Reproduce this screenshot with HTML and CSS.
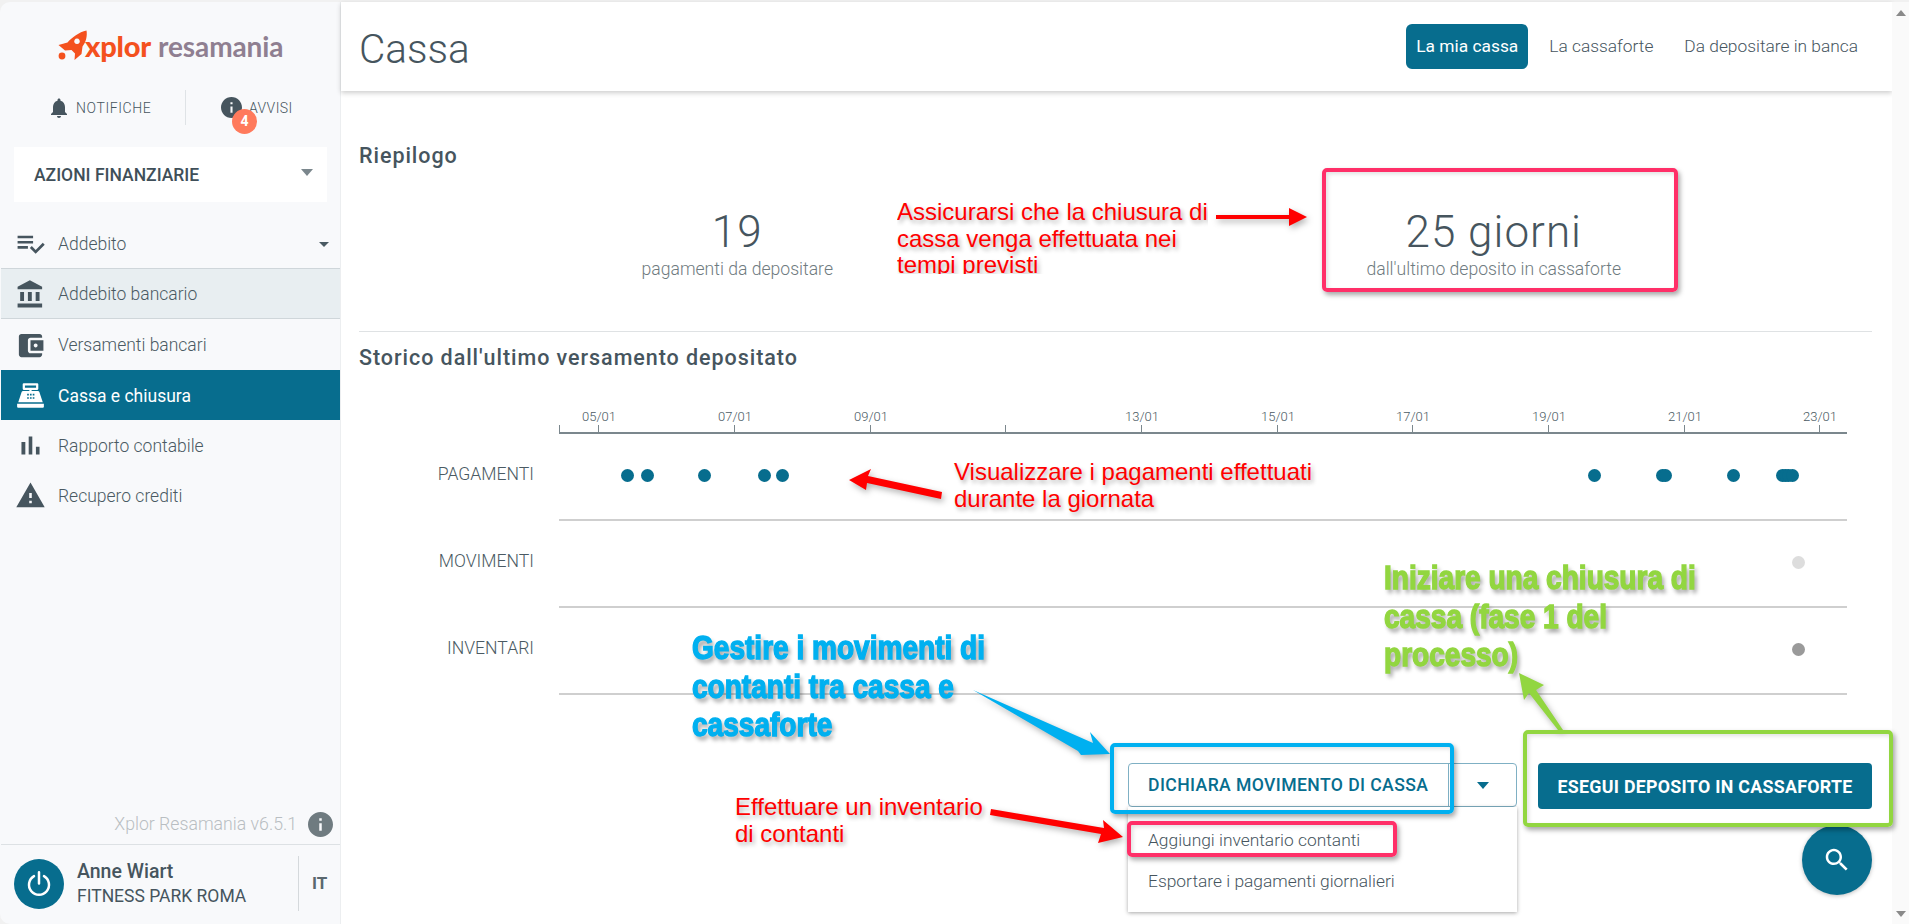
FILE: index.html
```html
<!DOCTYPE html>
<html lang="it">
<head>
<meta charset="utf-8">
<title>Cassa</title>
<link rel="stylesheet" href="styles.css">
</head>
<body>
<div class="app">
  <aside class="sidebar">
    <div class="logo">
      <svg class="rocket" viewBox="0 0 30 32"><path d="M28.5 0.5C29.5 6 28 12 24.5 16.5L23.5 24L16.5 30L17 23.5L13.5 20L7 20.5L0.5 15L9.5 12.5C14 7.5 21 2 28.5 0.5ZM19 8.5a2.8 2.8 0 1 0 0.01 0Z" fill-rule="evenodd"/><circle cx="4" cy="26" r="3.4"/></svg>
      <span class="logo-x">xplor</span><span class="logo-r">resamania</span>
    </div>
    <div class="alerts">
      <div class="alert">
        <svg class="ic-bell" viewBox="0 0 24 24"><path d="M12 22c1.1 0 2-.9 2-2h-4c0 1.1.89 2 2 2zm6-6v-5c0-3.07-1.64-5.64-4.5-6.32V4c0-.83-.67-1.5-1.5-1.5s-1.5.67-1.5 1.5v.68C7.63 5.36 6 7.92 6 11v5l-2 2v1h16v-1l-2-2z"/></svg>
        <span>NOTIFICHE</span>
      </div>
      <div class="alert alert-right">
        <svg class="ic-info" viewBox="2 2 20 20"><path d="M12 2C6.48 2 2 6.48 2 12s4.48 10 10 10 10-4.48 10-10S17.52 2 12 2zm1 15h-2v-6h2v6zm0-8h-2V7h2v2z"/></svg>
        <span>AVVISI</span>
        <b class="badge">4</b>
      </div>
    </div>
    <div class="select"><span>AZIONI FINANZIARIE</span><i class="caret caret-gray"></i></div>
    <nav class="menu">
      <a class="item item-first"><svg viewBox="0 0 24 24"><path d="M14 10H2v2h12v-2zm0-4H2v2h12V6zM2 16h8v-2H2v2zm19.5-4.5L23 13l-6.99 7-4.51-4.5L13 14l3.01 3 5.49-5.5z"/></svg><span>Addebito</span><i class="caret caret-small"></i></a>
      <a class="item item-sel"><svg viewBox="0 0 24 24"><path d="M4 10v7h3v-7H4zm6 0v7h3v-7h-3zM2 22h19v-3H2v3zm14-12v7h3v-7h-3zm-4.5-9L2 6v2h19V6l-9.5-5z"/></svg><span>Addebito bancario</span></a>
      <a class="item item-tall"><svg viewBox="0 0 24 24"><path d="M21 18v1c0 1.1-.9 2-2 2H5c-1.11 0-2-.9-2-2V5c0-1.1.89-2 2-2h14c1.1 0 2 .9 2 2v1h-9c-1.11 0-2 .9-2 2v8c0 1.1.89 2 2 2h9zm-9-2h10V8H12v8zm4-2.5c-.83 0-1.5-.67-1.5-1.5s.67-1.5 1.5-1.5 1.5.67 1.5 1.5-.67 1.5-1.5 1.5z"/></svg><span>Versamenti bancari</span></a>
      <a class="item item-active"><svg viewBox="0 0 26 24"><path fill-rule="evenodd" d="M7 1h12a1 1 0 0 1 1 1v4a1 1 0 0 1-1 1h-5v1h5.5c.8 0 1.4.5 1.6 1.2L24 18H2L4.900 9.200C5.100 8.500 5.700 8 6.500 8H12V7H7a1 1 0 0 1-1-1V2a1 1 0 0 1 1-1ZM8 3v2h10V3ZM10 10.500v1.500h1.500v-1.500ZM12.500 10.500v1.500h1.500v-1.500ZM15 10.500v1.500h1.500v-1.500ZM10 13.500v1.500h1.500v-1.500ZM12.500 13.500v1.500h1.500v-1.500ZM15 13.500v1.500h1.500v-1.500ZM1 19.500h24V22a1 1 0 0 1-1 1H2a1 1 0 0 1-1-1Z"/></svg><span>Cassa e chiusura</span></a>
      <a class="item"><svg viewBox="0 0 24 24"><path d="M5 9.200h3V19H5zM10.600 5h2.800v14h-2.800zm5.600 8H19v6h-2.800z"/></svg><span>Rapporto contabile</span></a>
      <a class="item"><svg viewBox="0 0 24 24"><path d="M1 21h22L12 2 1 21zm12-3h-2v-2h2v2zm0-4h-2v-4h2v4z"/></svg><span>Recupero crediti</span></a>
    </nav>
    <div class="version"><span>Xplor Resamania v6.5.1</span><svg viewBox="2 2 20 20"><path d="M12 2C6.48 2 2 6.48 2 12s4.48 10 10 10 10-4.48 10-10S17.52 2 12 2zm1 15h-2v-6h2v6zm0-8h-2V7h2v2z"/></svg></div>
    <div class="user">
      <div class="power"><svg viewBox="0 0 24 24"><path d="M8 5.700a8 8 0 1 0 8 0M12 2.500v9"/></svg></div>
      <div class="who"><strong>Anne Wiart</strong><span>FITNESS PARK ROMA</span></div>
      <div class="lang">IT</div>
    </div>
  </aside>

  <main class="main">
    <header class="top">
      <h1>Cassa</h1>
      <div class="tabs">
        <a class="tab tab-on">La mia cassa</a>
        <a class="tab">La cassaforte</a>
        <a class="tab">Da depositare in banca</a>
      </div>
    </header>
    <section class="content">
      <h2 class="h-first">Riepilogo</h2>
      <div class="stats">
        <div class="stat"><div class="num">19</div><div class="cap">pagamenti da depositare</div></div>
        <div class="stat"><div class="num">25 giorni</div><div class="cap">dall'ultimo deposito in cassaforte</div></div>
      </div>
      <h2 class="h-second">Storico dall'ultimo versamento depositato</h2>
      <div class="chart">
        <div class="axis">
          <i class="tick" style="left:0"></i>
          <i class="tick" style="left:39px"><span>05/01</span></i>
          <i class="tick" style="left:175px"><span>07/01</span></i>
          <i class="tick" style="left:311px"><span>09/01</span></i>
          <i class="tick" style="left:446px"></i>
          <i class="tick" style="left:582px"><span>13/01</span></i>
          <i class="tick" style="left:718px"><span>15/01</span></i>
          <i class="tick" style="left:853px"><span>17/01</span></i>
          <i class="tick" style="left:989px"><span>19/01</span></i>
          <i class="tick" style="left:1125px"><span>21/01</span></i>
          <i class="tick" style="left:1260px"><span>23/01</span></i>
        </div>
        <div class="row">
          <div class="row-label">PAGAMENTI</div>
          <div class="track">
            <i class="dot" style="left:62px"></i><i class="dot" style="left:82px"></i><i class="dot" style="left:139px"></i><i class="dot" style="left:199px"></i><i class="dot" style="left:217px"></i><i class="dot" style="left:1029px"></i><i class="dot" style="left:1097px"></i><i class="dot" style="left:1100px"></i><i class="dot" style="left:1168px"></i><i class="dot" style="left:1217px"></i><i class="dot" style="left:1220px"></i><i class="dot" style="left:1223px"></i><i class="dot" style="left:1227px"></i>
          </div>
        </div>
        <div class="row">
          <div class="row-label">MOVIMENTI</div>
          <div class="track"><i class="dot dot-light" style="left:1233px"></i></div>
        </div>
        <div class="row">
          <div class="row-label">INVENTARI</div>
          <div class="track"><i class="dot dot-gray" style="left:1233px"></i></div>
        </div>
      </div>
      <div class="actions">
        <div class="split">
          <button class="split-main">DICHIARA MOVIMENTO DI CASSA</button>
          <button class="split-caret"><i class="caret caret-teal"></i></button>
          <div class="dropdown">
            <a>Aggiungi inventario contanti</a>
            <a>Esportare i pagamenti giornalieri</a>
          </div>
        </div>
        <button class="primary">ESEGUI DEPOSITO IN CASSAFORTE</button>
      </div>
    </section>
    <button class="fab"><svg viewBox="0 0 24 24"><path d="M15.500 14h-.79l-.28-.27C15.410 12.590 16 11.110 16 9.500 16 5.910 13.090 3 9.500 3S3 5.910 3 9.500 5.910 16 9.500 16c1.610 0 3.090-.59 4.230-1.570l.27.28v.79l5 4.990L20.490 19l-4.990-5zm-6 0C7.010 14 5 11.990 5 9.500S7.010 5 9.500 5 14 7.010 14 9.500 11.990 14 9.500 14z"/></svg></button>
  </main>

  <div class="scrollbar"><i class="sb-up"></i><i class="sb-down"></i></div>

  <svg class="arrows" viewBox="0 0 1909 924">
    <g class="a-red">
      <path d="M1216 215H1289V208L1307 217L1289 226V219H1216Z"/>
      <path d="M942 492L868 476L871 469L849 480L866 490L867 483L941 499Z"/>
      <path d="M991 809L1104 828L1103 820L1123 837L1098 843L1101 834L990 815Z"/>
    </g>
    <path class="a-blue" d="M973 690L1093 743L1090 732L1110 754L1081 755L1078 751Z"/>
    <path class="a-green" d="M1519 673L1544 685L1536 690L1563 730L1558 730L1529 693L1524 700Z"/>
  </svg>

  <div class="frame frame-pink f1"></div>
  <div class="frame frame-blue f2"></div>
  <div class="frame frame-pink f3"></div>
  <div class="frame frame-green f4"></div>

  <div class="note note-red n1">Assicurarsi che la chiusura di<br>cassa venga effettuata nei<br>tempi previsti</div>
  <div class="note note-red n2">Visualizzare i pagamenti effettuati<br>durante la giornata</div>
  <div class="note note-red n3">Effettuare un inventario<br>di contanti</div>
  <div class="note note-heavy note-blue n4">Gestire i movimenti di<br>contanti tra cassa e<br>cassaforte</div>
  <div class="note note-heavy note-green n5">Iniziare una chiusura di<br>cassa (fase 1 del<br>processo)</div>
</div>
</body>
</html>
```
FILE: styles.css
```css
* { box-sizing: border-box; }
html, body { margin: 0; height: 100%; overflow: hidden; }
body { font-family: Roboto, "Liberation Sans", sans-serif; color: #4a5a63; background: #f1f1f1; }
.app { position: relative; display: flex; width: 1909px; height: 924px; padding-top: 2px; overflow: hidden; }

/* Sidebar */
.sidebar { width: 340px; flex: none; display: flex; flex-direction: column; background: #f8f9fb; border-radius: 10px 0 0 10px; padding-left: 1px; }
.logo { display: flex; align-items: baseline; height: 88px; padding: 28px 0 0 57px; line-height: 32px; }
.rocket { width: 30px; height: 32px; fill: #f4511e; align-self: flex-start; }
.logo-x { font-family: Lato, sans-serif; font-weight: 900; font-size: 29px; color: #f4511e; letter-spacing: -.2px; margin-right: 7px; margin-left: -3px; }
.logo-r { font-family: Lato, sans-serif; font-weight: 700; font-size: 28px; color: #8f7f91; letter-spacing: -.1px; }
.alerts { display: flex; height: 35px; margin-bottom: 22px; }
.alert { width: 185px; display: flex; align-items: center; padding-left: 47px; gap: 5px; font-size: 14px; font-weight: 300; letter-spacing: .6px; color: #46555e; border-right: 1px solid #dfe3e6; }
.alert-right { position: relative; width: 150px; border: 0; padding-left: 35px; gap: 7px; letter-spacing: .4px; }
.ic-bell { width: 24px; height: 24px; fill: #46555e; margin-left: -1px; }
.ic-info { width: 21px; height: 21px; fill: #46555e; }
.badge { position: absolute; left: 46px; top: 19px; width: 25px; height: 25px; border-radius: 50%; background: #ff7a5c; color: #fff; font-size: 14px; font-weight: 700; letter-spacing: 0; text-align: center; line-height: 25px; }
.select { display: flex; align-items: center; justify-content: space-between; height: 55px; margin: 0 13px; padding: 1px 14px 0 20px; background: #fff; font-size: 17.500px; font-weight: 500; color: #3f4f59; }
.caret { display: block; width: 0; height: 0; border-style: solid; border-color: #4a5a63 transparent transparent; }
.caret-gray { border-width: 7px 6.500px 0; border-top-color: #7b878d; margin-top: -6px; }
.caret-small { border-width: 5px 5px 0; position: absolute; right: 11px; top: 20px; }
.caret-teal { border-width: 7px 6px 0; border-top-color: #076d8e; }
.menu { display: flex; flex-direction: column; margin-top: 20px; flex: 1; }
.item { position: relative; display: flex; align-items: center; height: 50px; padding: 1px 0 0 14px; gap: 12px; font-size: 17.500px; font-weight: 300; color: #4a5a63; }
.item svg { width: 31px; height: 31px; fill: #46555e; flex: none; }
.item-first { height: 46px; padding-top: 0; padding-bottom: 3px; }
.item-sel { height: 51px; background: #e8eef1; border-top: 1px solid #cfd6da; border-bottom: 1px solid #cfd6da; }
.item-tall { height: 51px; }
.item-active { background: #076d8e; color: #fff; font-weight: 400; }
.item-active svg { fill: #fff; width: 29px; margin-left: 1px; margin-right: 1px; }
.version { display: flex; align-items: center; justify-content: flex-end; gap: 11px; height: 38px; padding-right: 7px; padding-bottom: 2px; font-size: 17.700px; font-weight: 300; color: #b9bec2; }
.version svg { width: 25px; height: 25px; fill: #6f7b80; }
.user { display: flex; align-items: center; height: 80px; padding-bottom: 2px; border-top: 1px solid #dde1e4; padding-left: 13px; }
.power { width: 50px; height: 50px; border-radius: 50%; background: #076d8e; display: flex; align-items: center; justify-content: center; flex: none; }
.power svg { width: 30px; height: 30px; fill: none; stroke: #fff; stroke-width: 2; stroke-linecap: round; }
.who { display: flex; flex-direction: column; margin-left: 13px; width: 221px; line-height: 24px; }
.who strong { font-size: 19.500px; font-weight: 500; color: #46555e; }
.who span { font-size: 17.500px; font-weight: 400; color: #46555e; }
.lang { height: 55px; border-left: 1px solid #d5d9dc; padding-left: 13px; line-height: 55px; font-size: 17px; font-weight: 700; color: #5a686f; }

/* Main */
.main { position: relative; width: 1552px; flex: none; background: #fff; border-left: 1px solid #eceef0; }
.top { display: flex; align-items: center; justify-content: space-between; height: 89px; padding: 0 24px 0 18px; background: #fff; box-shadow: 0 2px 5px rgba(0,0,0,.2); }
.top h1 { margin: 4px 0 0; font-size: 40.500px; font-weight: 300; color: #46555e; }
.tabs { display: flex; gap: 11px; margin-bottom: 1px; }
.tab { height: 45px; padding: 0 10px; line-height: 45px; font-size: 17.350px; font-weight: 300; color: #46555e; border-radius: 6px; }
.tab-on { background: #076d8e; color: #fff; font-weight: 400; }
.content { padding: 0 20px 0 18px; }
h2 { margin: 0; font-size: 21.500px; font-weight: 500; letter-spacing: .95px; color: #46555e; line-height: 24px; }
.h-first { padding-top: 53px; }
.stats { display: grid; grid-template-columns: 1fr 1fr; height: 164px; padding-top: 39px; border-bottom: 1px solid #dfe2e4; margin-bottom: 14px; }
.stat { text-align: center; }
.num { font-size: 44px; font-weight: 300; color: #46555e; line-height: 50px; letter-spacing: 1px; }
.cap { font-size: 17.600px; font-weight: 300; color: #6f7b80; line-height: 20px; margin-top: 2px; }
.chart { margin-top: 46px; }
.axis { position: relative; height: 18px; margin-left: 200px; width: 1288px; border-bottom: 2px solid #7b878d; }
.tick { position: absolute; bottom: -2px; width: 1px; height: 9px; background: #7b878d; }
.tick span { position: absolute; bottom: 10px; left: -16px; width: 33px; text-align: center; font-style: normal; font-size: 13px; font-weight: 300; color: #4a5a63; }
.row { display: flex; height: 87px; }
.row-label { width: 175px; padding-top: 30px; text-align: right; font-size: 17.600px; font-weight: 300; color: #4a5a63; }
.track { position: relative; flex: none; margin-left: 25px; width: 1288px; border-bottom: 2px solid #cfcfcf; }
.dot { position: absolute; top: 35px; width: 13px; height: 13px; border-radius: 50%; background: #076d8e; }
.dot-light { background: #dddddd; }
.dot-gray { background: #9a9a9a; }
.actions { display: flex; justify-content: flex-end; align-items: flex-start; gap: 21px; margin-top: 68px; }
.split { position: relative; display: flex; width: 389px; height: 44px; border: 1px solid #7fb0c4; border-radius: 4px; background: #fff; }
.split-main { flex: 1; border: 0; background: none; text-align: left; padding: 0 0 0 19px; font: 500 17.600px Roboto, sans-serif; letter-spacing: .4px; color: #076d8e; }
.split-caret { width: 68px; border: 0; border-left: 1px solid #7fb0c4; background: none; display: flex; align-items: center; justify-content: center; }
.dropdown { position: absolute; left: -1px; top: 43px; width: 389px; height: 105px; background: #fff; box-shadow: 0 1px 4px rgba(0,0,0,.35); padding-top: 21px; }
.dropdown a { display: block; height: 41px; padding-left: 20px; font-size: 17.400px; font-weight: 300; line-height: 24px; color: #46555e; }
.primary { width: 334px; height: 46px; border: 0; border-radius: 4px; background: #076d8e; color: #fff; font: 700 17.800px Roboto, sans-serif; letter-spacing: .3px; }
.fab { position: absolute; left: 1461px; top: 823px; width: 70px; height: 70px; border: 0; border-radius: 50%; background: #076d8e; display: flex; align-items: center; justify-content: center; padding: 0; box-shadow: 0 1px 4px rgba(0,0,0,.25); }
.fab svg { width: 30px; height: 30px; fill: #fff; }
.scrollbar { position: relative; width: 17px; flex: none; background: #fafafa; }
.sb-up, .sb-down { position: absolute; left: 4px; width: 0; height: 0; border-left: 5px solid transparent; border-right: 5px solid transparent; }
.sb-up { top: 8px; border-bottom: 6px solid #8a8a8a; }
.sb-down { bottom: 7px; border-top: 6px solid #8a8a8a; }

/* Screen annotations, drawn over the page */
.arrows { position: absolute; left: 0; top: 0; width: 1909px; height: 924px; pointer-events: none; filter: drop-shadow(2px 3px 3px rgba(0,0,0,.3)); }
.a-red { fill: #ff0000; }
.a-blue { fill: #00b0f0; }
.a-green { fill: #92d640; }
.frame { position: absolute; border-radius: 5px; border: 4px solid; box-shadow: 2px 3px 5px rgba(0,0,0,.35), inset 2px 2px 4px rgba(0,0,0,.12); }
.frame-pink { border-color: #ff2f68; }
.frame-blue { border-color: #00b0f0; }
.frame-green { border-color: #92d640; }
.f1 { left: 1322px; top: 168px; width: 356px; height: 124px; }
.f2 { left: 1110px; top: 743px; width: 344px; height: 71px; }
.f3 { left: 1127px; top: 821px; width: 270px; height: 36px; }
.f4 { left: 1523px; top: 730px; width: 370px; height: 97px; }
.note { position: absolute; white-space: nowrap; }
.note-red { font-family: "Liberation Sans", sans-serif; font-size: 24px; line-height: 26.500px; color: #ff0000; text-shadow: 2px 3px 4px rgba(0,0,0,.3); }
.note-heavy { font-family: "Liberation Sans", sans-serif; font-weight: 700; font-size: 33px; line-height: 38.500px; -webkit-text-stroke: 1.4px currentColor; text-shadow: 3px 4px 5px rgba(0,0,0,.4); transform: scaleX(.85); transform-origin: left top; }
.note-blue { color: #00b0f0; }
.note-green { color: #92d640; }
.n1 { left: 897px; top: 199px; height: 75px; overflow: hidden; }
.n2 { left: 954px; top: 459px; }
.n3 { left: 735px; top: 794px; }
.n4 { left: 692px; top: 629px; }
.n5 { left: 1384px; top: 559px; }
```
